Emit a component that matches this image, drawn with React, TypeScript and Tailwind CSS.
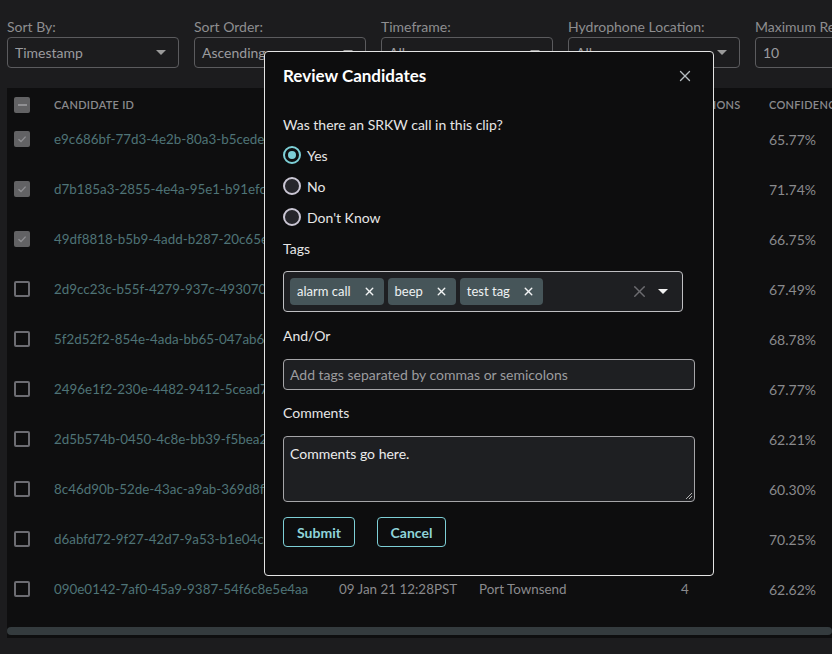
import { X } from 'lucide-react';

const rows = [
  { id: 'e9c686bf-77d3-4e2b-80a3-b5cede1a42f0', ts: '09 Jan 21 12:41PST', loc: 'Port Townsend', n: 4, conf: '65.77%', checked: true },
  { id: 'd7b185a3-2855-4e4a-95e1-b91efc0d83a1', ts: '09 Jan 21 12:39PST', loc: 'Port Townsend', n: 4, conf: '71.74%', checked: true },
  { id: '49df8818-b5b9-4add-b287-20c65e7f1b22', ts: '09 Jan 21 12:38PST', loc: 'Port Townsend', n: 4, conf: '66.75%', checked: true },
  { id: '2d9cc23c-b55f-4279-937c-493070ab5d11', ts: '09 Jan 21 12:36PST', loc: 'Port Townsend', n: 4, conf: '67.49%', checked: false },
  { id: '5f2d52f2-854e-4ada-bb65-047ab6e3c9d4', ts: '09 Jan 21 12:35PST', loc: 'Port Townsend', n: 4, conf: '68.78%', checked: false },
  { id: '2496e1f2-230e-4482-9412-5cead7f0a8b3', ts: '09 Jan 21 12:33PST', loc: 'Port Townsend', n: 4, conf: '67.77%', checked: false },
  { id: '2d5b574b-0450-4c8e-bb39-f5bea2c71e60', ts: '09 Jan 21 12:32PST', loc: 'Port Townsend', n: 4, conf: '62.21%', checked: false },
  { id: '8c46d90b-52de-43ac-a9ab-369d8f2e4b15', ts: '09 Jan 21 12:30PST', loc: 'Port Townsend', n: 4, conf: '60.30%', checked: false },
  { id: 'd6abfd72-9f27-42d7-9a53-b1e04c6d7a98', ts: '09 Jan 21 12:29PST', loc: 'Port Townsend', n: 4, conf: '70.25%', checked: false },
  { id: '090e0142-7af0-45a9-9387-54f6c8e5e4aa', ts: '09 Jan 21 12:28PST', loc: 'Port Townsend', n: 4, conf: '62.62%', checked: false },
];

const filters = [
  { label: 'Sort By:', value: 'Timestamp', caret: true },
  { label: 'Sort Order:', value: 'Ascending', caret: true },
  { label: 'Timeframe:', value: 'All', caret: true },
  { label: 'Hydrophone Location:', value: 'All', caret: true },
  { label: 'Maximum Results:', value: '10', caret: false },
];

function Caret({ color = '#9a9a9a' }: { color?: string }) {
  return (
    <svg width="10" height="5" viewBox="0 0 10 5">
      <path d="M0 0 L10 0 L5 5 Z" fill={color} />
    </svg>
  );
}

function Checkbox({ checked }: { checked: boolean }) {
  if (checked) {
    return (
      <div className="w-4 h-4 rounded-[2px] bg-[#626264] flex items-center justify-center">
        <svg width="12" height="12" viewBox="0 0 12 12">
          <path d="M2.5 6.2 L5 8.6 L9.6 3.6" stroke="#909093" strokeWidth="1.4" fill="none" />
        </svg>
      </div>
    );
  }
  return <div className="w-4 h-4 rounded-[2px] border-2 border-[#6c6c72]" />;
}

function Radio({ label, selected }: { label: string; selected?: boolean }) {
  return (
    <div className="flex items-center gap-[6px] h-[20px]">
      {selected ? (
        <div className="w-[18px] h-[18px] rounded-full border-2 border-[#7dcfd6] flex items-center justify-center">
          <div className="w-[8px] h-[8px] rounded-full bg-[#7dcfd6]" />
        </div>
      ) : (
        <div className="w-[18px] h-[18px] rounded-full border-2 border-[#cac6d4] bg-[#26262b]" />
      )}
      <span className="text-[14px] text-[#e6e6e6]">{label}</span>
    </div>
  );
}

function Chip({ text }: { text: string }) {
  return (
    <div className="h-[27px] rounded-[4px] bg-[#465559] flex items-center pl-[7px] pr-[8px] gap-[12px] text-[13px] text-[#eef2f3]">
      <span>{text}</span>
      <X size={13} strokeWidth={2.6} color="#f2f4f5" />
    </div>
  );
}

export default function App() {
  return (
    <div className="relative w-[832px] h-[654px] overflow-hidden bg-[#1c1c1e] font-['Lato','Noto_Sans',sans-serif]">
      <div className="flex gap-[15px] pl-[7px] pt-[18px]">
        {filters.map((f) => (
          <div key={f.label} className="w-[172px] shrink-0">
            <div className="text-[14px] leading-[18px] text-[#8e8e90] whitespace-nowrap">{f.label}</div>
            <div className="mt-[1px] h-[31px] border border-[#5b5b5e] rounded-[4px] flex items-center justify-between pl-[7px] pr-[12px] text-[14px] text-[#9b9b9e]">
              <span>{f.value}</span>
              {f.caret && <Caret />}
            </div>
          </div>
        ))}
      </div>

      <div className="ml-[7px] mt-[20px] h-[550px] bg-[#0e0e0f] flex flex-col">
        <div className="h-[26px] pt-[8px] flex items-center text-[11px] font-semibold text-[#8a8a8d] tracking-wide">
          <div className="w-[47px] pl-[7px] shrink-0">
            <div className="w-4 h-4 rounded-[2px] bg-[#626264] flex items-center justify-center">
              <div className="w-[9px] h-[2px] bg-[#909093]" />
            </div>
          </div>
          <div className="w-[285px] shrink-0">CANDIDATE ID</div>
          <div className="w-[140px] shrink-0">TIMESTAMP</div>
          <div className="w-[180px] shrink-0">LOCATION</div>
          <div className="w-[110px] shrink-0">ANNOTATIONS</div>
          <div className="shrink-0 whitespace-nowrap">CONFIDENCE</div>
        </div>
        {rows.map((r) => (
          <div key={r.id} className="h-[50px] flex items-center text-[13.4px] shrink-0">
            <div className="w-[47px] pl-[7px] shrink-0">
              <Checkbox checked={r.checked} />
            </div>
            <div className="w-[285px] shrink-0 text-[#4f7477] whitespace-nowrap">{r.id}</div>
            <div className="w-[140px] shrink-0 text-[#8a8a8d] whitespace-nowrap">{r.ts}</div>
            <div className="w-[180px] shrink-0 text-[#8a8a8d]">{r.loc}</div>
            <div className="w-[110px] shrink-0 pl-[22px] text-[#8a8a8d]">{r.n}</div>
            <div className="shrink-0 text-[14px] text-[#8a8a8d]">{r.conf}</div>
          </div>
        ))}
        <div className="mt-[13px] h-[8px] rounded-full bg-[#343b3e]" />
      </div>

      <div className="absolute left-[264px] top-[51px] w-[450px] h-[525px] bg-[#0d0d0e] border border-[#e4e4e4] rounded-[4px] px-[18px] pt-[13px]">
        <div className="flex items-center justify-between h-[22px]">
          <h2 className="text-[17px] font-bold text-white">Review Candidates</h2>
          <X size={18} strokeWidth={1.8} color="#b4bcc0" className="mr-[1px]" />
        </div>
        <div className="mt-[28px] text-[14px] text-[#e6e6e6] leading-[20px]">Was there an SRKW call in this clip?</div>
        <div className="mt-[10px] flex flex-col gap-[11px]">
          <Radio label="Yes" selected />
          <Radio label="No" />
          <Radio label="Don't Know" />
        </div>
        <div className="mt-[12px] text-[14px] text-[#e6e6e6] leading-[20px]">Tags</div>
        <div className="mt-[12px] w-[400px] h-[41px] bg-[#1e1f22] border border-[#bfbfc2] rounded-[4px] flex items-center pl-[6px] pr-[14px]">
          <div className="flex gap-[4px]">
            <Chip text="alarm call" />
            <Chip text="beep" />
            <Chip text="test tag" />
          </div>
          <div className="ml-auto flex items-center gap-[9px]">
            <X size={19} strokeWidth={1.8} color="#6c6c70" />
            <Caret color="#f2f2f2" />
          </div>
        </div>
        <div className="mt-[14px] text-[14px] text-[#e6e6e6] leading-[20px]">And/Or</div>
        <div className="mt-[13px] w-[412px] h-[31px] bg-[#1e1f22] border border-[#a5a5a8] rounded-[4px] flex items-center px-[6px] text-[14px] text-[#9c9c9f]">
          Add tags separated by commas or semicolons
        </div>
        <div className="mt-[13px] text-[14px] text-[#e6e6e6] leading-[20px]">Comments</div>
        <div className="relative mt-[13px] w-[412px] h-[66px] bg-[#1e1f22] border border-[#a5a5a8] rounded-[4px] px-[6px] pt-[6px] text-[14px] text-[#ececec]">
          Comments go here.
          <svg className="absolute right-[1px] bottom-[1px]" width="8" height="8" viewBox="0 0 8 8">
            <path d="M7 1 L1 7 M7 4 L4 7" stroke="#b0b0b0" strokeWidth="1" />
          </svg>
        </div>
        <div className="mt-[15px] flex gap-[22px]">
          <button className="w-[72px] h-[30px] border border-[#7dcfd6] rounded-[4px] text-[14px] font-bold text-[#8fd3d9]">Submit</button>
          <button className="w-[69px] h-[30px] border border-[#7dcfd6] rounded-[4px] text-[14px] font-bold text-[#8fd3d9]">Cancel</button>
        </div>
      </div>
    </div>
  );
}
